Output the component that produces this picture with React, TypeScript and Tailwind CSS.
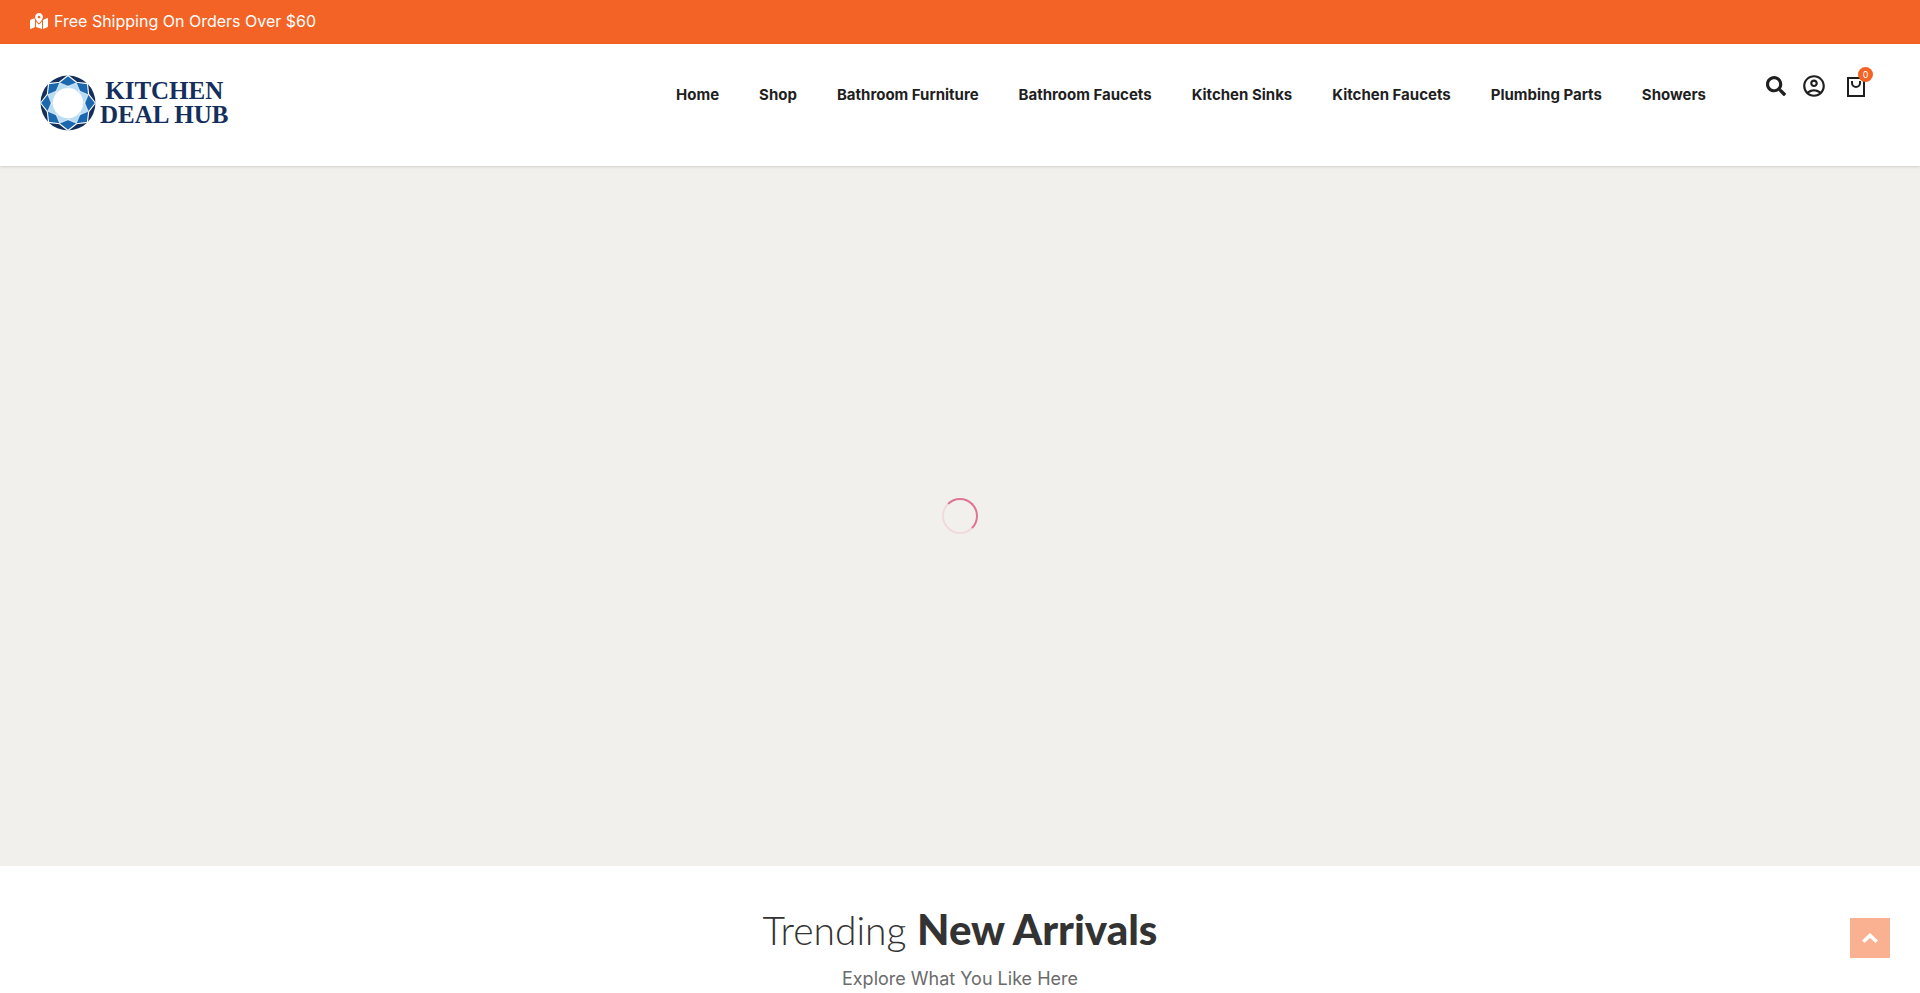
import { FaMapMarkedAlt, FaSearch } from "react-icons/fa";
import { MdOutlineAccountCircle } from "react-icons/md";

const navLinks = [
  "Home",
  "Shop",
  "Bathroom Furniture",
  "Bathroom Faucets",
  "Kitchen Sinks",
  "Kitchen Faucets",
  "Plumbing Parts",
  "Showers",
];

const point = (radius: number, deg: number) => {
  const rad = (deg * Math.PI) / 180;
  return `${50 + radius * Math.sin(rad)},${50 - radius * Math.cos(rad)}`;
};

const facets = [0, 45, 90, 135, 180, 225, 270, 315];

const GemMark = () => (
  <svg viewBox="0 0 100 100" className="size-14 shrink-0" aria-hidden="true">
    <circle cx="50" cy="50" r="49" fill="#142f5c" />
    <g stroke="#fff" strokeLinejoin="round">
      <polygon
        points={facets
          .map((deg) => `${point(49, deg)} ${point(40, deg + 22.5)}`)
          .join(" ")}
        fill="#1c68ae"
        strokeWidth="2"
      />
      {/* pale triangles pointing outwards between the blue facets */}
      {facets.map((deg) => (
        <polygon
          key={deg}
          points={`${point(39, deg + 22.5)} ${point(29, deg + 50)} ${point(29, deg - 5)}`}
          fill="#b9dcf5"
          strokeWidth="1"
        />
      ))}
    </g>
    <circle cx="50" cy="50" r="27" fill="#fff" />
  </svg>
);

const BagIcon = () => (
  <svg
    viewBox="0 0 18 20"
    className="h-5 w-[18px]"
    fill="none"
    stroke="currentColor"
    strokeWidth="2"
    aria-hidden="true"
  >
    <path d="M1 1h16v18H1z" />
    <path d="M5 4v2a4 4 0 0 0 8 0V4" />
  </svg>
);

const App = () => {
  return (
    <div className="bg-white font-['Inter',sans-serif] text-[#1f1f1f]">
      <div className="flex h-11 items-center gap-1.5 bg-[#f36325] px-[30px] pb-0.5 text-base text-white">
        <FaMapMarkedAlt className="size-[18px]" />
        <p>Free Shipping On Orders Over $60</p>
      </div>

      <header className="relative flex items-start justify-between px-10 pt-[31px] pb-[35px] shadow-sm">
        <a
          href="#"
          className="flex items-center gap-1 font-['Liberation_Serif',serif] text-[25px] leading-6 font-bold text-[#142f5c]"
        >
          <GemMark />
          <span className="text-center">
            KITCHEN
            <br />
            DEAL HUB
          </span>
        </a>

        <div className="flex items-start">
          <nav className="flex gap-10 pt-2 text-[15px] leading-6 font-bold">
            {navLinks.map((link) => (
              <a key={link} href="#">
                {link}
              </a>
            ))}
          </nav>
          <div className="flex h-[22px] items-center pr-[15px] pl-[60px]">
            <button type="button" aria-label="Search">
              <FaSearch className="size-5" />
            </button>
            <a href="#" aria-label="Account" className="ml-[15px]">
              <MdOutlineAccountCircle className="size-[26px]" />
            </a>
            <a href="#" aria-label="Cart" className="relative ml-5 pt-0.5">
              <BagIcon />
              <span className="absolute -top-2 left-[11px] flex size-[15px] items-center justify-center rounded-full bg-[#f36325] text-[9px] text-white">
                0
              </span>
            </a>
          </div>
        </div>
      </header>

      <main>
        <section className="flex h-[700px] items-center justify-center bg-[#f2f0ec]">
          <div
            role="status"
            aria-label="Loading"
            className="size-9 rounded-full border-2 border-[#f1dadd] border-t-[#dd7592] border-r-[#dd7592]"
          />
        </section>

        <section className="pt-[38px] text-center">
          <h2 className="font-['Lato',sans-serif] text-[39px] leading-[50px] font-light text-[#333]">
            Trending <span className="text-[42px] font-black">New Arrivals</span>
          </h2>
          <p className="mt-2.5 text-lg leading-7 text-[#6b6b6b]">
            Explore What You Like Here
          </p>
        </section>
      </main>

      <button
        type="button"
        aria-label="Back to top"
        className="fixed right-[30px] bottom-[35px] flex size-10 items-center justify-center bg-[#f9b192] text-white"
      >
        <svg
          viewBox="0 0 16 10"
          className="h-2.5 w-4"
          fill="none"
          stroke="currentColor"
          strokeWidth="3.6"
          aria-hidden="true"
        >
          <path d="M1.3 8.7 8 2.4l6.7 6.3" />
        </svg>
      </button>
    </div>
  );
};

export default App;
